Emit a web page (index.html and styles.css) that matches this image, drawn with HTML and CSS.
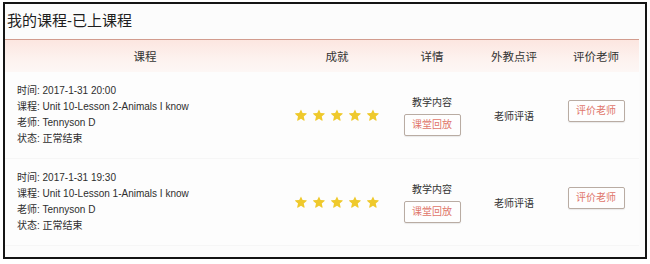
FILE: index.html
```html
<!DOCTYPE html>
<html lang="zh">
<head>
<meta charset="utf-8">
<link rel="stylesheet" href="styles.css">
</head>
<body>
<div class="frame">
  <div class="title">我的课程-已上课程</div>
  <div class="table">
    <div class="head">
      <div class="c1">课程</div>
      <div class="c2">成就</div>
      <div class="c3">详情</div>
      <div class="c4">外教点评</div>
      <div class="c5">评价老师</div>
    </div>
    <div class="row">
      <div class="c1 info">
        <div>时间: 2017-1-31 20:00</div>
        <div>课程: Unit 10-Lesson 2-Animals I know</div>
        <div>老师: Tennyson D</div>
        <div>状态: 正常结束</div>
      </div>
      <div class="c2 stars">
        <svg viewBox="0 0 24 24" class="star"><path d="M12 2.5l2.7 6 6.5.6c.6.1.8.8.4 1.2l-4.9 4.3 1.5 6.4c.1.6-.5 1-1 .7L12 18.3l-5.6 3.4c-.5.3-1.1-.1-1-.7l1.5-6.4-4.9-4.3c-.4-.4-.2-1.1.4-1.2l6.5-.6z"/></svg>
        <svg viewBox="0 0 24 24" class="star"><path d="M12 2.5l2.7 6 6.5.6c.6.1.8.8.4 1.2l-4.9 4.3 1.5 6.4c.1.6-.5 1-1 .7L12 18.3l-5.6 3.4c-.5.3-1.1-.1-1-.7l1.5-6.4-4.9-4.3c-.4-.4-.2-1.1.4-1.2l6.5-.6z"/></svg>
        <svg viewBox="0 0 24 24" class="star"><path d="M12 2.5l2.7 6 6.5.6c.6.1.8.8.4 1.2l-4.9 4.3 1.5 6.4c.1.6-.5 1-1 .7L12 18.3l-5.6 3.4c-.5.3-1.1-.1-1-.7l1.5-6.4-4.9-4.3c-.4-.4-.2-1.1.4-1.2l6.5-.6z"/></svg>
        <svg viewBox="0 0 24 24" class="star"><path d="M12 2.5l2.7 6 6.5.6c.6.1.8.8.4 1.2l-4.9 4.3 1.5 6.4c.1.6-.5 1-1 .7L12 18.3l-5.6 3.4c-.5.3-1.1-.1-1-.7l1.5-6.4-4.9-4.3c-.4-.4-.2-1.1.4-1.2l6.5-.6z"/></svg>
        <svg viewBox="0 0 24 24" class="star"><path d="M12 2.5l2.7 6 6.5.6c.6.1.8.8.4 1.2l-4.9 4.3 1.5 6.4c.1.6-.5 1-1 .7L12 18.3l-5.6 3.4c-.5.3-1.1-.1-1-.7l1.5-6.4-4.9-4.3c-.4-.4-.2-1.1.4-1.2l6.5-.6z"/></svg>
      </div>
      <div class="c3 detail">
        <div class="label">教学内容</div>
        <div class="btn">课堂回放</div>
      </div>
      <div class="c4 comment">老师评语</div>
      <div class="c5 rate"><div class="btn">评价老师</div></div>
    </div>
    <div class="row">
      <div class="c1 info">
        <div>时间: 2017-1-31 19:30</div>
        <div>课程: Unit 10-Lesson 1-Animals I know</div>
        <div>老师: Tennyson D</div>
        <div>状态: 正常结束</div>
      </div>
      <div class="c2 stars">
        <svg viewBox="0 0 24 24" class="star"><path d="M12 2.5l2.7 6 6.5.6c.6.1.8.8.4 1.2l-4.9 4.3 1.5 6.4c.1.6-.5 1-1 .7L12 18.3l-5.6 3.4c-.5.3-1.1-.1-1-.7l1.5-6.4-4.9-4.3c-.4-.4-.2-1.1.4-1.2l6.5-.6z"/></svg>
        <svg viewBox="0 0 24 24" class="star"><path d="M12 2.5l2.7 6 6.5.6c.6.1.8.8.4 1.2l-4.9 4.3 1.5 6.4c.1.6-.5 1-1 .7L12 18.3l-5.6 3.4c-.5.3-1.1-.1-1-.7l1.5-6.4-4.9-4.3c-.4-.4-.2-1.1.4-1.2l6.5-.6z"/></svg>
        <svg viewBox="0 0 24 24" class="star"><path d="M12 2.5l2.7 6 6.5.6c.6.1.8.8.4 1.2l-4.9 4.3 1.5 6.4c.1.6-.5 1-1 .7L12 18.3l-5.6 3.4c-.5.3-1.1-.1-1-.7l1.5-6.4-4.9-4.3c-.4-.4-.2-1.1.4-1.2l6.5-.6z"/></svg>
        <svg viewBox="0 0 24 24" class="star"><path d="M12 2.5l2.7 6 6.5.6c.6.1.8.8.4 1.2l-4.9 4.3 1.5 6.4c.1.6-.5 1-1 .7L12 18.3l-5.6 3.4c-.5.3-1.1-.1-1-.7l1.5-6.4-4.9-4.3c-.4-.4-.2-1.1.4-1.2l6.5-.6z"/></svg>
        <svg viewBox="0 0 24 24" class="star"><path d="M12 2.5l2.7 6 6.5.6c.6.1.8.8.4 1.2l-4.9 4.3 1.5 6.4c.1.6-.5 1-1 .7L12 18.3l-5.6 3.4c-.5.3-1.1-.1-1-.7l1.5-6.4-4.9-4.3c-.4-.4-.2-1.1.4-1.2l6.5-.6z"/></svg>
      </div>
      <div class="c3 detail">
        <div class="label">教学内容</div>
        <div class="btn">课堂回放</div>
      </div>
      <div class="c4 comment">老师评语</div>
      <div class="c5 rate"><div class="btn">评价老师</div></div>
    </div>
  </div>
</div>
</body>
</html>
```

FILE: styles.css
```css
html, body {
  margin: 0;
  padding: 0;
  background: #ffffff;
}
body {
  padding: 2px 3px 0 3px;
  font-family: "Liberation Sans", "Noto Sans CJK SC", sans-serif;
  color: #333;
}
.frame {
  box-sizing: border-box;
  width: 644px;
  height: 257px;
  border: 2px solid #141414;
  background: #fcfcfc;
  padding: 0 6px 0 0;
}
.title {
  height: 35px;
  line-height: 33px;
  padding-left: 2px;
  font-size: 15px;
  color: #1e1e1e;
}
.table {
  width: 634px;
}
.head {
  display: grid;
  grid-template-columns: 280px 104px 86px 78px 86px;
  height: 32px;
  align-items: center;
  border-top: 1px solid #d29c8e;
  background: linear-gradient(#fce6e0, #fdf2ef 60%, #fdf7f5);
  font-size: 11.5px;
  color: #333;
  text-align: center;
}
.row {
  display: grid;
  grid-template-columns: 280px 104px 86px 78px 86px;
  height: 86px;
  align-items: center;
  background: #fdfdfd;
  border-bottom: 1px solid #f6f6f6;
}
.info {
  padding-left: 12px;
  font-size: 10px;
  line-height: 16px;
  color: #2e2e2e;
}
.stars {
  display: flex;
  justify-content: center;
  gap: 4px;
}
.star {
  width: 14px;
  height: 14px;
  fill: #efc92c;
}
.detail {
  display: flex;
  flex-direction: column;
  align-items: center;
  gap: 5px;
  font-size: 10px;
  color: #333;
}
.btn {
  box-sizing: border-box;
  width: 57px;
  height: 22px;
  line-height: 20px;
  text-align: center;
  border: 1px solid #b9aca3;
  border-radius: 2px;
  background: #fefefe;
  box-shadow: 0 1px 1px rgba(0, 0, 0, 0.08);
  font-size: 10px;
  color: #e0766a;
}
.comment {
  text-align: center;
  font-size: 10px;
  color: #333;
}
.rate {
  display: flex;
  justify-content: center;
  padding-bottom: 8px;
}
```
